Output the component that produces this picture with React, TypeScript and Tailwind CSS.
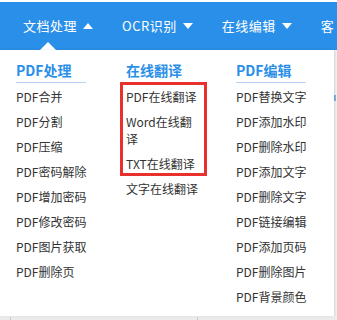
import React from "react";

const columns = [
  {
    title: "PDF处理",
    items: ["PDF合并", "PDF分割", "PDF压缩", "PDF密码解除", "PDF增加密码", "PDF修改密码", "PDF图片获取", "PDF删除页"],
  },
  {
    title: "在线翻译",
    items: ["PDF在线翻译", "Word在线翻译", "TXT在线翻译", "文字在线翻译"],
  },
  {
    title: "PDF编辑",
    items: [
      "PDF替换文字",
      "PDF添加水印",
      "PDF删除水印",
      "PDF添加文字",
      "PDF删除文字",
      "PDF链接编辑",
      "PDF添加页码",
      "PDF删除图片",
      "PDF背景颜色",
    ],
  },
];

const nav = [
  { label: "文档处理", open: true },
  { label: "OCR识别", open: false },
  { label: "在线编辑", open: false },
  { label: "客", open: false, bare: true },
];

const Caret = ({ up }: { up: boolean }) => (
  <span
    className={
      up
        ? "ml-[6px] inline-block h-0 w-0 border-x-[5.5px] border-b-[6px] border-x-transparent border-b-white"
        : "ml-[6px] inline-block h-0 w-0 border-x-[5.5px] border-t-[6px] border-x-transparent border-t-white"
    }
  />
);

const App = () => {
  return (
    <div
      className="flex h-[320px] w-[337px] flex-col overflow-hidden bg-white"
      style={{ fontFamily: '"Noto Sans CJK SC", "Noto Sans", sans-serif' }}
    >
      <div className="h-[2px] bg-white" />
      <nav className="relative flex h-[48px] shrink-0 items-center bg-[#2a8fe9] pl-[23px] text-[13px] text-white whitespace-nowrap">
        {nav.map((n) => (
          <div key={n.label} className="mr-[29px] flex shrink-0 items-center tracking-[0.5px]">
            <span>{n.label}</span>
            {!n.bare && <Caret up={n.open} />}
          </div>
        ))}
        <span className="absolute bottom-0 left-[40px] h-0 w-0 border-x-8 border-b-8 border-x-transparent border-b-white" />
      </nav>

      <div className="flex flex-1 bg-[#eef1f4]">
        <section className="relative flex h-[266px] w-[334px] shrink-0 overflow-hidden bg-white pl-[16px] pt-[10px] shadow-[1px_0_2px_rgba(0,0,0,0.12)]">
          {columns.map((col) => (
            <div key={col.title} className="w-[110px] shrink-0">
              <h3 className="w-[70px] border-b border-[#b6d3f3] pb-[2px] text-[14px] font-bold leading-[20px] text-[#2a8fe9]">
                {col.title}
              </h3>
              <ul className="pt-[1px] text-[12px] leading-[17px] text-[#333]">
                {col.items.map((it) => (
                  <li key={it} className="w-[75px] py-[4px]">
                    {it}
                  </li>
                ))}
              </ul>
            </div>
          ))}
          <div className="pointer-events-none absolute left-[120px] top-[32px] h-[94px] w-[87px] border-[3px] border-[#e8302c]" />
        </section>
        <div className="flex-1">
          <div className="mt-[45px] h-[6px] w-[2px] bg-[#7fb4ea]" />
        </div>
      </div>

      <div className="flex h-[3.5px] shrink-0 bg-[#ebebeb]">
        <div className="w-[11px] border-r border-[#cfcfcf]" />
        <div className="w-[187px] border-r border-[#cfcfcf]" />
      </div>
    </div>
  );
};

export default App;
